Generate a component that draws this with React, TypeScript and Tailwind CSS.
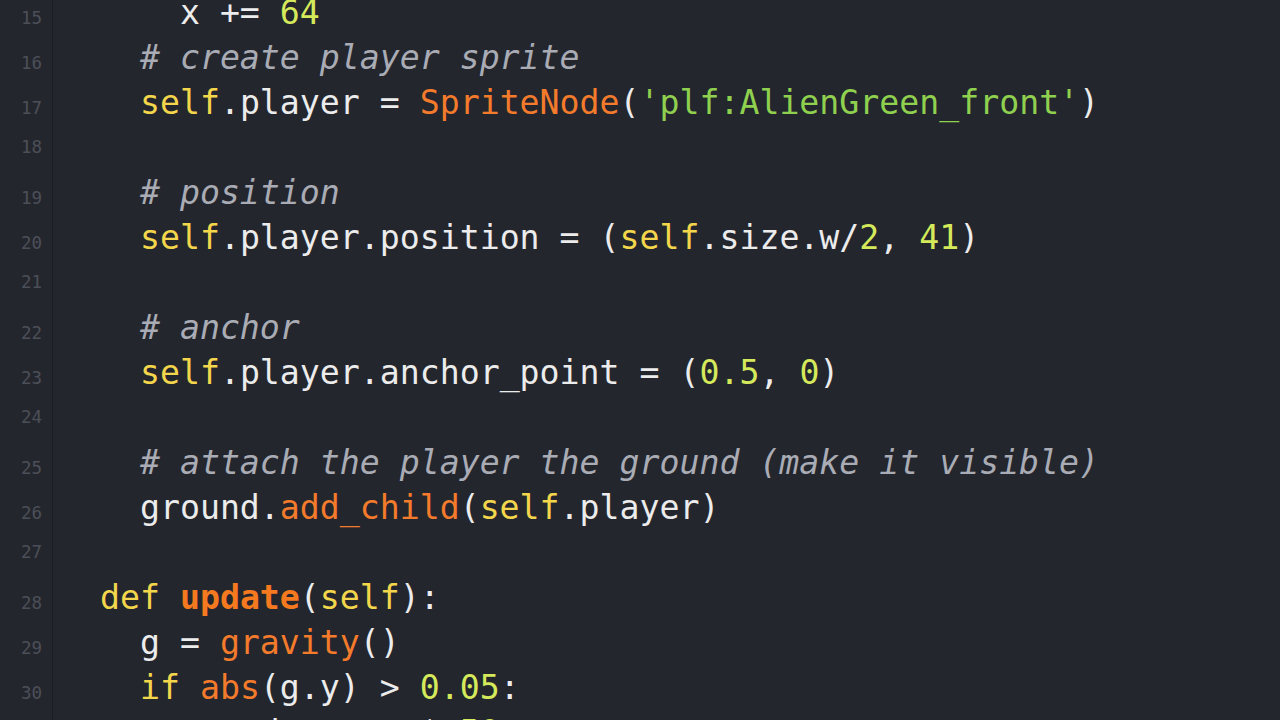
import React from 'react';

type Tok = [string, string];

const W = 'text-[#ececec]';
const Y = 'text-[#f3d64b]';
const O = 'text-[#f37b2b]';
const OB = 'text-[#f57a1f] font-bold';
const G = 'text-[#8fd14f]';
const N = 'text-[#d5ea5b]';
const C = 'text-[#a9acb4] italic';

const LINES: { n: number; toks: Tok[] }[] = [
  { n: 15, toks: [[W, '    x += '], [N, '64']] },
  { n: 16, toks: [[C, '  # create player sprite']] },
  {
    n: 17,
    toks: [[W, '  '], [Y, 'self'], [W, '.player = '], [O, 'SpriteNode'], [W, '('], [G, "'plf:AlienGreen_front'"], [W, ')']],
  },
  { n: 18, toks: [] },
  { n: 19, toks: [[C, '  # position']] },
  {
    n: 20,
    toks: [[W, '  '], [Y, 'self'], [W, '.player.position = ('], [Y, 'self'], [W, '.size.w/'], [N, '2'], [W, ', '], [N, '41'], [W, ')']],
  },
  { n: 21, toks: [] },
  { n: 22, toks: [[C, '  # anchor']] },
  {
    n: 23,
    toks: [[W, '  '], [Y, 'self'], [W, '.player.anchor_point = ('], [N, '0.5'], [W, ', '], [N, '0'], [W, ')']],
  },
  { n: 24, toks: [] },
  { n: 25, toks: [[C, '  # attach the player the ground (make it visible)']] },
  { n: 26, toks: [[W, '  ground.'], [O, 'add_child'], [W, '('], [Y, 'self'], [W, '.player)']] },
  { n: 27, toks: [] },
  { n: 28, toks: [[Y, 'def '], [OB, 'update'], [W, '('], [Y, 'self'], [W, '):']] },
  { n: 29, toks: [[W, '  g = '], [O, 'gravity'], [W, '()']] },
  { n: 30, toks: [[W, '  '], [Y, 'if '], [O, 'abs'], [W, '(g.y) > '], [N, '0.05'], [W, ':']] },
  { n: 31, toks: [[W, '    speed = g.y * '], [N, '50']] },
];

export default function App() {
  return (
    <div className="w-[1280px] h-[720px] overflow-hidden bg-[#24262e] flex">
      <div className="w-[53px] shrink-0 border-r border-[#1b1d23] bg-[#24262e]" />
      <div className="flex-1 relative">
        <div
          className="-mt-[10px] flex flex-col"
          style={{ fontFamily: '"DejaVu Sans Mono", monospace' }}
        >
          {LINES.map((line) => (
            <div key={line.n} className="h-[45px] flex items-baseline">
              <span className="-ml-[53px] w-[42px] shrink-0 text-right text-[17.5px] leading-[45px] text-[#4c4f57]">
                {line.n}
              </span>
              <span className="pl-[58px] whitespace-pre text-[33.2px] leading-[45px]">
                {line.toks.map((t, i) => (
                  <span key={i} className={t[0]}>
                    {t[1]}
                  </span>
                ))}
              </span>
            </div>
          ))}
        </div>
      </div>
    </div>
  );
}
